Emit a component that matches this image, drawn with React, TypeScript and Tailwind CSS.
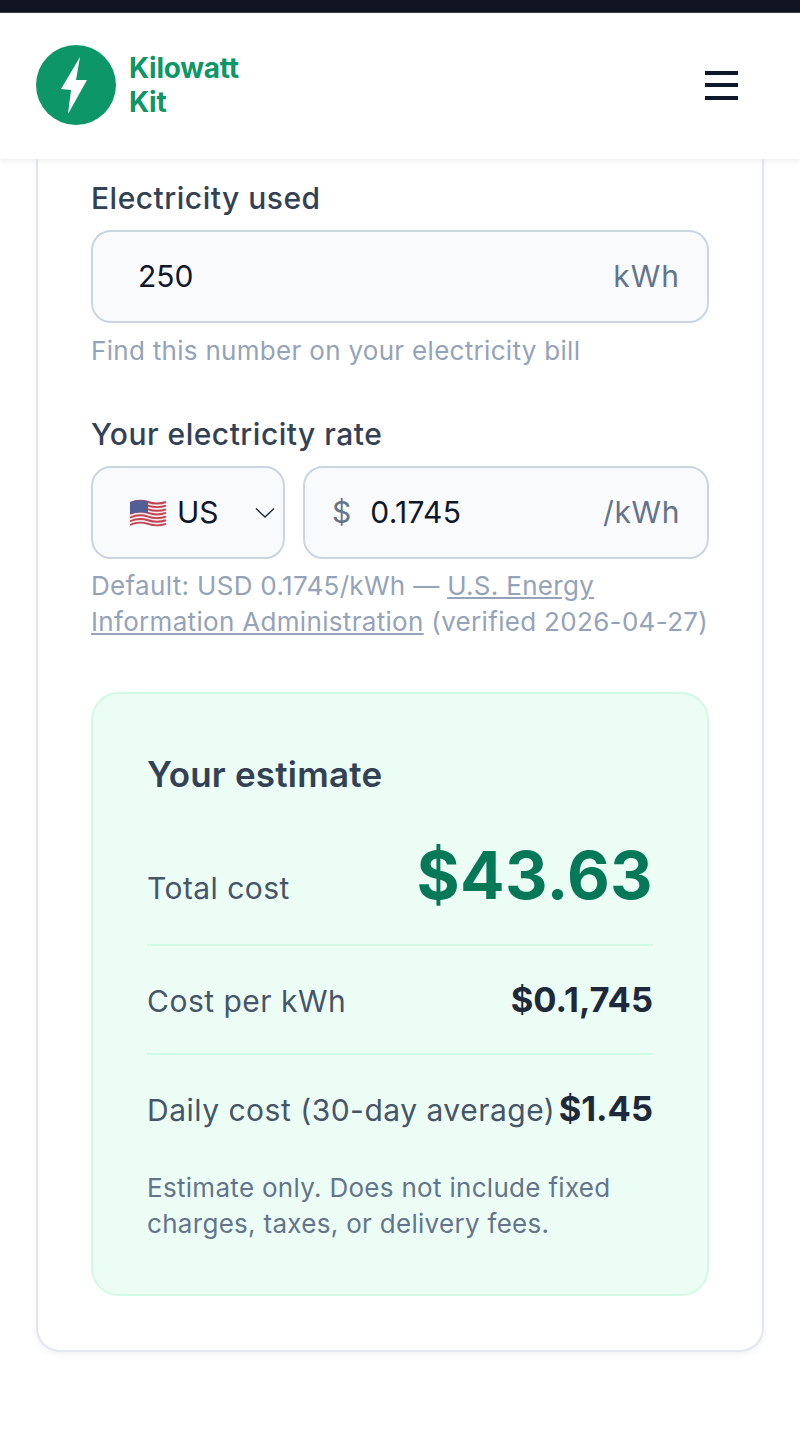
import React from 'react';

function UsFlag() {
  const stripes = [0, 1, 2, 3, 4, 5, 6];
  return (
    <svg width="38" height="30" viewBox="0 0 38 30" className="shrink-0">
      <path d="M1 4 Q10 0 19 3 T37 3 V26 Q28 29 19 26 T1 27 Z" fill="#f3eef0" />
      {stripes.map((s) => (
        <path
          key={s}
          d={`M1 ${5 + s * 3.65} Q10 ${1 + s * 3.65} 19 ${4 + s * 3.65} T37 ${4 + s * 3.65}`}
          fill="none"
          stroke="#c4434f"
          strokeWidth="1.9"
        />
      ))}
      <path d="M1 4 Q8 1 19 3 V15 Q8 13 1 16 Z" fill="#525f96" />
    </svg>
  );
}

function Row({ label, value, border }: { label: string; value: string; border?: boolean }) {
  return (
    <div className={border ? 'flex items-baseline justify-between h-[109px] pt-[34px] border-b-2 border-[#d1fae5]' : 'flex items-baseline justify-between h-[109px] pt-[34px]'}>
      <span className="text-[#475569] text-[30px] leading-[36px] tracking-[0.5px] whitespace-nowrap">{label}</span>
      <span className="text-[#1e293b] text-[34.5px] leading-[40px] font-bold">{value}</span>
    </div>
  );
}

export default function App() {
  return (
    <div className="min-h-[1442px] bg-white flex flex-col overflow-hidden font-['Inter',sans-serif]">
      {/* top bar */}
      <div className="h-[13px] bg-[#0f1420] border-b border-[#3a3f4c] relative z-20" />

      {/* header */}
      <header className="h-[146px] bg-white relative z-10 flex items-center justify-between pl-[36px] pr-[62px] pb-[2px] shadow-[0_3px_4px_rgba(15,23,42,0.05)]">
        <div className="flex items-center gap-[13px]">
          <div className="w-[80px] h-[80px] rounded-full bg-[#0d9668] flex items-center justify-center">
            <svg width="26" height="57" viewBox="0 0 26 57" className="mr-[4px]">
              <path d="M19 0 L0 32 L10 33 L7 57 L26 23 L15 23 Z" fill="#ffffff" />
            </svg>
          </div>
          <div className="text-[#0d9668] text-[28px] leading-[34px] font-bold tracking-[-0.25px]">
            Kilowatt
            <br />
            Kit
          </div>
        </div>
        <div className="w-[33px] flex flex-col gap-[8.5px]">
          <div className="h-[4px] bg-[#0f172a]" />
          <div className="h-[4px] bg-[#0f172a]" />
          <div className="h-[4px] bg-[#0f172a]" />
        </div>
      </header>

      {/* card */}
      <main className="px-[36px]">
        <div className="-mt-[20px] border-2 border-[#e2e8f0] rounded-[24px] bg-white shadow-[0_2px_6px_rgba(15,23,42,0.06)] px-[53px] pt-[37px] pb-[54px]">
          <label className="block text-[#334155] text-[30px] leading-[40px] font-medium tracking-[0.5px]">Electricity used</label>
          <div className="mt-[12px] h-[93px] rounded-[20px] border-2 border-[#cbd5e1] bg-[#f8fafc] flex items-center justify-between pl-[45px] pr-[27px]">
            <span className="text-[#0f172a] text-[30px]">250</span>
            <span className="text-[#64748b] text-[30px] tracking-[1px]">kWh</span>
          </div>
          <p className="mt-[10px] text-[#94a3b8] text-[26px] leading-[36px] tracking-[0.3px]">Find this number on your electricity bill</p>

          <label className="block mt-[45px] text-[#334155] text-[30px] leading-[40px] font-medium tracking-[0.5px]">Your electricity rate</label>
          <div className="mt-[12px] flex gap-[18px]">
            <div className="w-[194px] h-[93px] rounded-[20px] border-2 border-[#cbd5e1] bg-[#f8fafc] flex items-center pl-[36px] pr-[8px]">
              <UsFlag />
              <span className="ml-[10px] text-[#0f172a] text-[30px]">US</span>
              <svg width="20" height="12" viewBox="0 0 20 12" className="ml-auto" fill="none" stroke="#1e293b" strokeWidth="1.4">
                <path d="M1 1.5 L10 10 L19 1.5" />
              </svg>
            </div>
            <div className="flex-1 h-[93px] rounded-[20px] border-2 border-[#cbd5e1] bg-[#f8fafc] flex items-center pl-[27px] pr-[27px]">
              <span className="text-[#64748b] text-[30px]">$</span>
              <span className="ml-[19px] text-[#0f172a] text-[30px] tracking-[0.3px]">0.1745</span>
              <span className="ml-auto text-[#64748b] text-[30px] tracking-[0.6px]">/kWh</span>
            </div>
          </div>
          <p className="mt-[9px] text-[#94a3b8] text-[26px] leading-[36px] tracking-[0.32px] whitespace-nowrap">
            Default: USD 0.1745/kWh — <span className="underline">U.S. Energy</span>
            <br />
            <span className="underline">Information Administration</span> (verified 2026-04-27)
          </p>

          {/* estimate */}
          <section className="mt-[52px] border-2 border-[#d1fae5] rounded-[28px] bg-[#ecfdf5] px-[54px] pt-[56px] pb-[52px]">
            <h2 className="text-[#334155] text-[35px] leading-[48px] font-semibold tracking-[0.2px]">Your estimate</h2>
            <div className="mt-[20px] flex items-baseline justify-between h-[128px] pt-[24px] border-b-2 border-[#d1fae5]">
              <span className="text-[#475569] text-[30px] tracking-[0.45px]">Total cost</span>
              <span className="text-[#047857] text-[66px] leading-none font-bold tracking-[0.3px]">$43.63</span>
            </div>
            <Row label="Cost per kWh" value="$0.1,745" border />
            <Row label="Daily cost (30-day average)" value="$1.45" />
            <p className="mt-[6px] text-[#64748b] text-[26px] leading-[36px] tracking-[0.3px]">
              Estimate only. Does not include fixed charges, taxes, or delivery fees.
            </p>
          </section>
        </div>
      </main>
    </div>
  );
}
